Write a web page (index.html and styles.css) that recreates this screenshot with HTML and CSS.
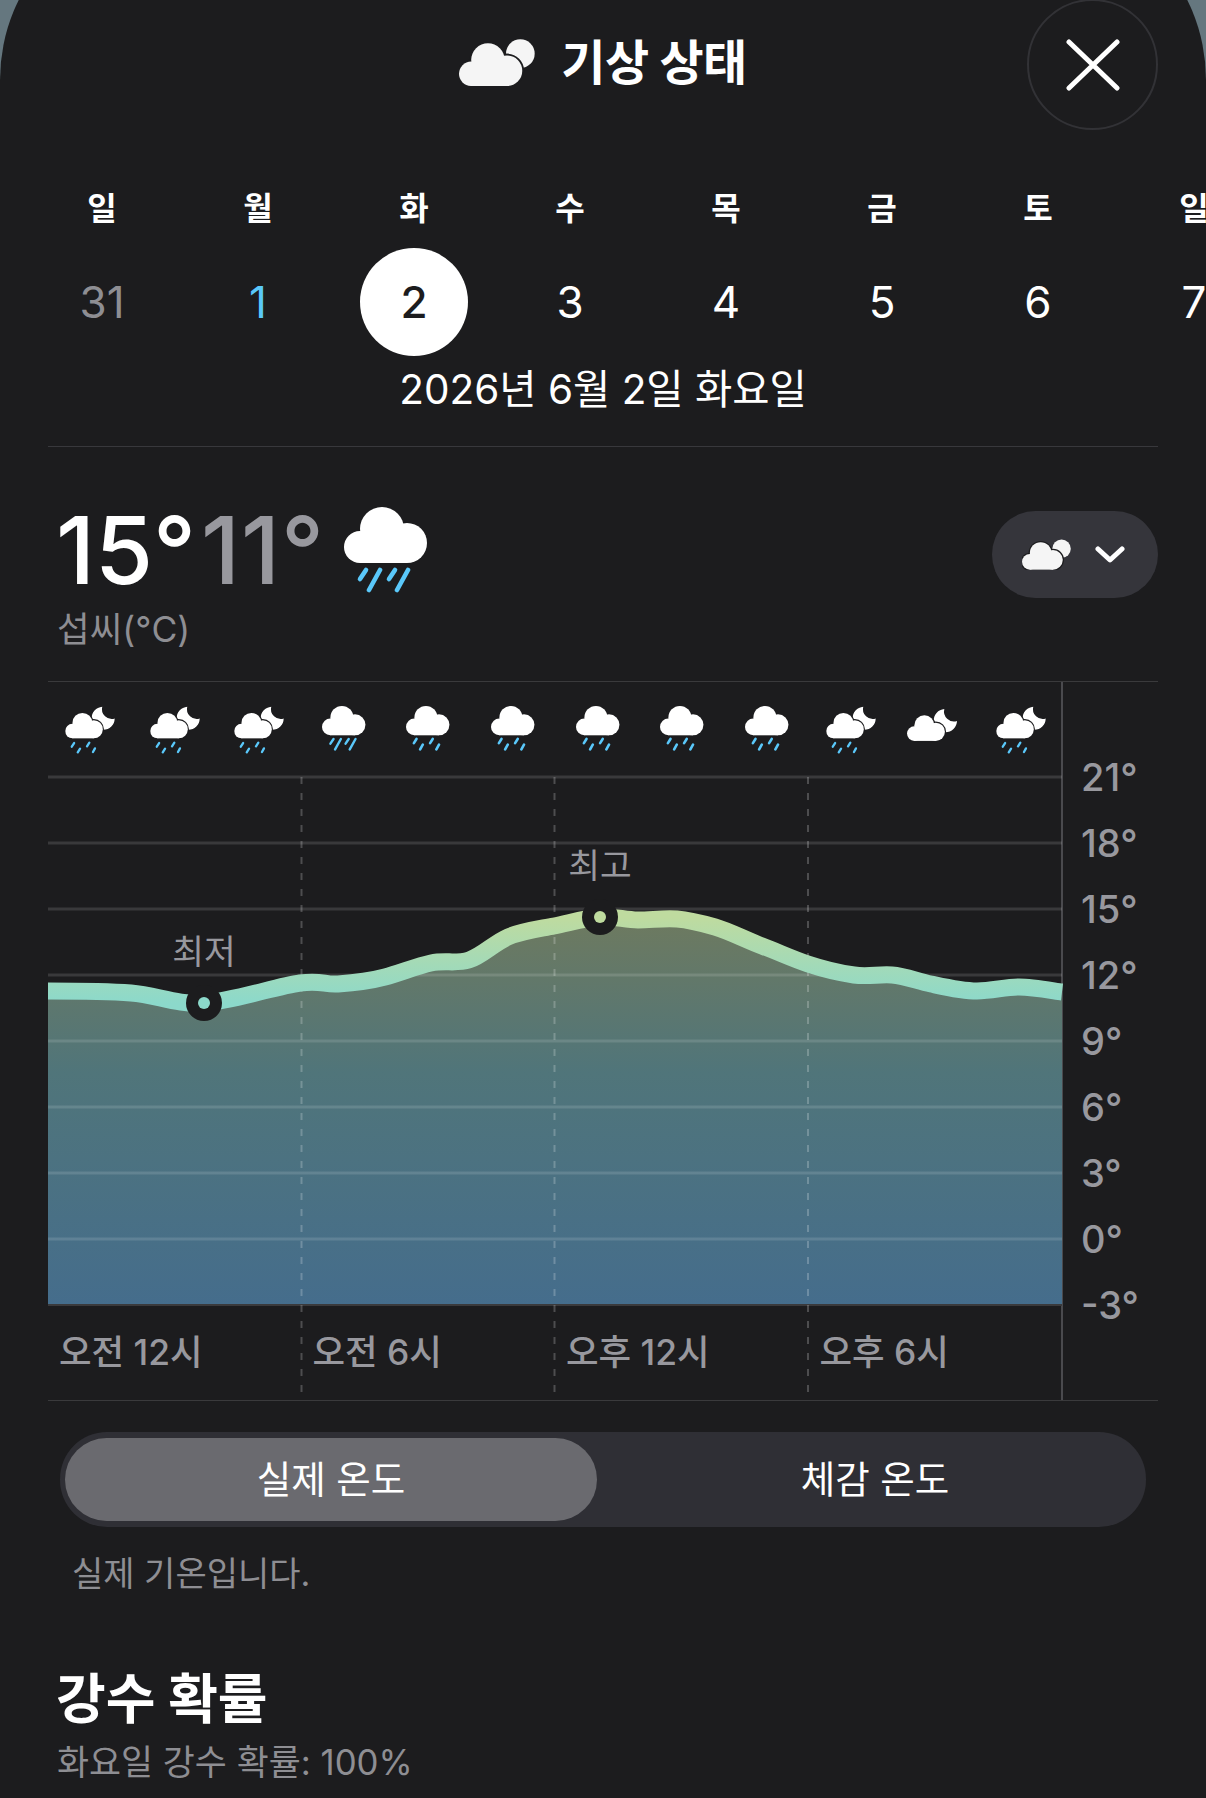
FILE: index.html
```html
<!DOCTYPE html>
<html lang="ko">

<head>
    <meta charset="UTF-8">
    <meta name="viewport" content="width=device-width, initial-scale=1.0">
    <title>기상 상태</title>
    <link rel="stylesheet" href="styles.css">
</head>

<body>

    <svg class="icon-defs" width="0" height="0" aria-hidden="true">
        <defs>
            <g id="cloud-shape">
                <circle cx="16" cy="40" r="16"></circle>
                <circle cx="38" cy="22" r="22"></circle>
                <circle cx="63" cy="36" r="20"></circle>
                <rect x="16" y="36" width="47" height="20"></rect>
            </g>
            <symbol id="icon-sun-cloud" viewBox="0 0 228 141">
                <circle cx="184" cy="44" r="43" fill="#f5f5f5"></circle>
                <use href="#cloud-shape" transform="translate(0 13) scale(2.286)" fill="#1c1c1e" stroke="#1c1c1e" stroke-width="5"></use>
                <use href="#cloud-shape" transform="translate(0 13) scale(2.286)" fill="#f5f5f5"></use>
            </symbol>
            <symbol id="icon-rain-heavy" viewBox="0 0 84 86">
                <use href="#cloud-shape" fill="#fff"></use>
                <g stroke="#5ac8fa" stroke-width="4.6" stroke-linecap="round">
                    <path d="M16 72 22 63"></path>
                    <path d="M25 83 36 63"></path>
                    <path d="M45 72 51 63"></path>
                    <path d="M53 83 64 63"></path>
                </g>
            </symbol>
            <symbol id="icon-rain-light" viewBox="0 0 84 86">
                <use href="#cloud-shape" fill="#fff"></use>
                <g stroke="#5ac8fa" stroke-width="5" stroke-linecap="round">
                    <path d="M15 71 20 63"></path>
                    <path d="M27 83 32 74"></path>
                    <path d="M46 71 51 63"></path>
                    <path d="M58 83 63 74"></path>
                </g>
            </symbol>
            <symbol id="icon-moon-cloud" viewBox="0 0 150 100">
                <path d="M112 2A35 35 0 1 0 150 38A30 30 0 0 1 112 2Z" fill="#fff"></path>
                <use href="#cloud-shape" transform="translate(0 21) scale(1.37)" fill="#1c1c1e" stroke="#1c1c1e" stroke-width="5"></use>
                <use href="#cloud-shape" transform="translate(0 21) scale(1.37)" fill="#fff"></use>
            </symbol>
            <symbol id="icon-moon-rain" viewBox="0 0 150 145">
                <use href="#icon-moon-cloud" width="150" height="100"></use>
                <g stroke="#5ac8fa" stroke-width="7" stroke-linecap="round">
                    <path d="M20 123 27 112"></path>
                    <path d="M38 140 45 129"></path>
                    <path d="M66 122 73 111"></path>
                    <path d="M84 139 90 128"></path>
                </g>
            </symbol>
        </defs>
    </svg>

    <div class="sheet">

        <header class="sheet-header">
            <svg class="title-icon"><use href="#icon-sun-cloud"></use></svg>
            <h1>기상 상태</h1>
            <div class="close-btn">
                <svg viewBox="0 0 54 52" width="54" height="52">
                    <path d="M3 3 51 49M51 3 3 49" stroke="#fff" stroke-width="5" stroke-linecap="round"></path>
                </svg>
            </div>
        </header>

        <div class="week">
            <div class="day"><span class="day-name">일</span><span class="day-num past">31</span></div>
            <div class="day"><span class="day-name">월</span><span class="day-num today">1</span></div>
            <div class="day"><span class="day-name">화</span><span class="day-num selected">2</span></div>
            <div class="day"><span class="day-name">수</span><span class="day-num">3</span></div>
            <div class="day"><span class="day-name">목</span><span class="day-num">4</span></div>
            <div class="day"><span class="day-name">금</span><span class="day-num">5</span></div>
            <div class="day"><span class="day-name">토</span><span class="day-num">6</span></div>
            <div class="day"><span class="day-name">일</span><span class="day-num">7</span></div>
        </div>
        <p class="full-date">2026년 6월 2일 화요일</p>

        <div class="summary">
            <div class="summary-top">
                <div class="temps">
                    <span class="temp-high">15°</span><span class="temp-low">11°</span>
                    <svg class="temp-icon"><use href="#icon-rain-heavy"></use></svg>
                </div>
                <div class="picker">
                    <svg class="picker-icon"><use href="#icon-sun-cloud"></use></svg>
                    <svg viewBox="0 0 30 17" width="30" height="17">
                        <path d="M3 3 15 14 27 3" fill="none" stroke="#fff" stroke-width="5" stroke-linecap="round" stroke-linejoin="round"></path>
                    </svg>
                </div>
            </div>
            <p class="unit">섭씨(°C)</p>
        </div>

        <div class="chart">
            <div class="plot">
                <div class="hour-icons">
                    <svg class="hour-icon"><use href="#icon-moon-rain"></use></svg>
                    <svg class="hour-icon"><use href="#icon-moon-rain"></use></svg>
                    <svg class="hour-icon"><use href="#icon-moon-rain"></use></svg>
                    <svg class="hour-icon rain"><use href="#icon-rain-heavy"></use></svg>
                    <svg class="hour-icon rain"><use href="#icon-rain-light"></use></svg>
                    <svg class="hour-icon rain"><use href="#icon-rain-light"></use></svg>
                    <svg class="hour-icon rain"><use href="#icon-rain-light"></use></svg>
                    <svg class="hour-icon rain"><use href="#icon-rain-light"></use></svg>
                    <svg class="hour-icon rain"><use href="#icon-rain-light"></use></svg>
                    <svg class="hour-icon"><use href="#icon-moon-rain"></use></svg>
                    <svg class="hour-icon dry"><use href="#icon-moon-cloud"></use></svg>
                    <svg class="hour-icon"><use href="#icon-moon-rain"></use></svg>
                </div>
                <svg class="plot-svg" viewBox="0 0 1014 623" width="1014" height="623">
                    <defs>
                        <linearGradient id="areaFill" gradientUnits="userSpaceOnUse" x1="0" y1="140" x2="0" y2="528">
                            <stop offset="0" stop-color="#6e7a5f"></stop>
                            <stop offset="0.4" stop-color="#50757a"></stop>
                            <stop offset="1" stop-color="#456d8c"></stop>
                        </linearGradient>
                        <linearGradient id="lineFill" gradientUnits="userSpaceOnUse" x1="0" y1="140" x2="0" y2="226">
                            <stop offset="0" stop-color="#bfdb9f"></stop>
                            <stop offset="1" stop-color="#8cd9cb"></stop>
                        </linearGradient>
                    </defs>
                    <path fill="url(#areaFill)" d="M0 214S57 214 83 216S128 228 156 226S230 209 252 206S276 208 290 207S322 204 337 200S369 189 383 186S408 187 421 183S446 166 460 160S491 152 506 149S538 141 552 140S577 143 590 143S616 141 629 142S653 146 667 150S698 163 714 169S745 182 760 187S792 196 806 198S831 197 844 198S869 204 883 207S914 214 929 214S957 210 971 210S1006 214 1014 215V528H0Z"></path>
                    <g stroke="#fff" stroke-opacity="0.13" stroke-width="3">
                        <path d="M0 0H1014"></path>
                        <path d="M0 66H1014"></path>
                        <path d="M0 132H1014"></path>
                        <path d="M0 198H1014"></path>
                        <path d="M0 264H1014"></path>
                        <path d="M0 330H1014"></path>
                        <path d="M0 396H1014"></path>
                        <path d="M0 462H1014"></path>
                    </g>
                    <path d="M0 528H1014" stroke="#3a3a3c" stroke-width="2"></path>
                    <g stroke="#fff" stroke-opacity="0.22" stroke-width="2" stroke-dasharray="7 9">
                        <path d="M253.5 0V618"></path>
                        <path d="M506.5 0V618"></path>
                        <path d="M760 0V618"></path>
                    </g>
                    <path fill="none" stroke="url(#lineFill)" stroke-width="17" d="M0 214S57 214 83 216S128 228 156 226S230 209 252 206S276 208 290 207S322 204 337 200S369 189 383 186S408 187 421 183S446 166 460 160S491 152 506 149S538 141 552 140S577 143 590 143S616 141 629 142S653 146 667 150S698 163 714 169S745 182 760 187S792 196 806 198S831 197 844 198S869 204 883 207S914 214 929 214S957 210 971 210S1006 214 1014 215"></path>
                    <circle cx="156" cy="226" r="18" fill="#1c1c1e"></circle>
                    <circle cx="156" cy="226" r="6" fill="#8cd9cb"></circle>
                    <circle cx="552" cy="140" r="18" fill="#1c1c1e"></circle>
                    <circle cx="552" cy="140" r="6" fill="#bfdb9f"></circle>
                </svg>
                <span class="chart-note note-low">최저</span>
                <span class="chart-note note-high">최고</span>
                <div class="hour-labels">
                    <span>오전 12시</span>
                    <span>오전 6시</span>
                    <span>오후 12시</span>
                    <span>오후 6시</span>
                </div>
            </div>
            <div class="axis">
                <span>21°</span>
                <span>18°</span>
                <span>15°</span>
                <span>12°</span>
                <span>9°</span>
                <span>6°</span>
                <span>3°</span>
                <span>0°</span>
                <span>-3°</span>
            </div>
        </div>

        <div class="segment">
            <div class="segment-item active">실제 온도</div>
            <div class="segment-item second">체감 온도</div>
        </div>
        <p class="segment-note">실제 기온입니다.</p>

        <h2 class="section-title">강수 확률</h2>
        <p class="section-sub">화요일 강수 확률: 100%</p>

    </div>

</body>

</html>
```

FILE: styles.css
```css
* {
    box-sizing: border-box;
}

html,
body {
    margin: 0;
    height: 1798px;
    overflow: hidden;
}

body {
    background: #65777f;
    font-family: Inter, 'Noto Sans CJK KR', sans-serif;
    color: #fff;
}

.icon-defs {
    display: block;
    height: 0;
}

p,
h1,
h2 {
    margin: 0;
}

.sheet {
    margin-top: -100px;
    padding: 100px 48px 0;
    height: 1898px;
    background: #1c1c1e;
    border-radius: 180px 180px 0 0;
}

/* header */
.sheet-header {
    position: relative;
    height: 129px;
    display: flex;
    justify-content: center;
    align-items: center;
    gap: 26px;
}

.sheet-header h1 {
    margin-top: -4px;
    font-size: 48px;
    font-weight: 700;
    line-height: 56px;
    letter-spacing: -0.5px;
}

.title-icon {
    width: 76px;
    height: 47px;
    margin-top: -4px;
}

.close-btn {
    position: absolute;
    top: -1px;
    right: 0;
    width: 131px;
    height: 131px;
    border: 2px solid #323236;
    border-radius: 50%;
    display: flex;
    align-items: center;
    justify-content: center;
}

/* week strip */
.week {
    display: flex;
    margin: 60px 0 0 -24px;
    width: 1248px;
}

.day {
    width: 156px;
    flex-shrink: 0;
    display: flex;
    flex-direction: column;
    align-items: center;
    gap: 19px;
}

.day-name {
    font-size: 32px;
    font-weight: 700;
    line-height: 40px;
}

.day-num {
    width: 108px;
    height: 108px;
    border-radius: 50%;
    display: flex;
    align-items: center;
    justify-content: center;
    font-size: 44px;
    line-height: 1;
}

.day-num.past {
    color: #8e8e93;
}

.day-num.today {
    color: #5ac8fa;
}

.day-num.selected {
    background: #fff;
    color: #1c1c1e;
    font-weight: 500;
}

.full-date {
    margin-top: 10px;
    padding-bottom: 32px;
    border-bottom: 1px solid #38383c;
    font-size: 40.5px;
    line-height: 48px;
    text-align: center;
}

/* summary */
.summary {
    padding: 53px 0 29px;
}

.summary-top {
    display: flex;
    justify-content: space-between;
    align-items: center;
    height: 100px;
}

.temps {
    display: flex;
    align-items: center;
    padding-left: 8px;
    font-size: 94px;
    font-weight: 500;
    line-height: 100px;
}

.temp-low {
    margin-left: 5px;
    letter-spacing: 1px;
    color: #98989e;
}

.temp-icon {
    width: 84px;
    height: 86px;
    margin: 0 0 0 19px;
}

.picker {
    width: 166px;
    height: 87px;
    margin-top: 8px;
    padding-right: 4px;
    background: #35353b;
    border-radius: 44px;
    display: flex;
    align-items: center;
    justify-content: center;
    gap: 24px;
}

.picker-icon {
    width: 49px;
    height: 31px;
}

.unit {
    margin-top: 8px;
    padding-left: 9px;
    font-size: 35.5px;
    line-height: 44px;
    color: #8e8e93;
}

/* chart */
.chart {
    display: grid;
    grid-template-columns: 1014px 96px;
    height: 720px;
    border-top: 1px solid #3a3a3c;
    border-bottom: 1px solid #3a3a3c;
}

.plot {
    position: relative;
    width: 1015px;
    border-right: 2px solid #4a4a4e;
}

.hour-icons {
    display: flex;
    align-items: center;
    height: 95px;
    padding-left: 17px;
    gap: 34.6px;
}

.hour-icon {
    width: 50px;
    height: 48px;
    flex-shrink: 0;
}

.hour-icon.rain {
    width: 44px;
    height: 45px;
    margin: -3px 3px 0;
}

.hour-icon.dry {
    transform: translate(-4px, -5px);
}

.plot-svg {
    display: block;
    overflow: visible;
}

.chart-note {
    position: absolute;
    transform: translateX(-50%);
    font-size: 34.5px;
    line-height: 40px;
    color: #98989e;
}

.note-low {
    left: 156px;
    top: 250px;
}

.note-high {
    left: 552px;
    top: 164px;
}

.hour-labels {
    position: absolute;
    left: 0;
    right: 0;
    top: 651px;
    display: grid;
    grid-template-columns: repeat(4, 253.5px);
    font-size: 35.4px;
    font-weight: 500;
    line-height: 40px;
    color: #98989e;
}

.hour-labels span {
    padding-left: 11px;
}

.axis {
    display: flex;
    flex-direction: column;
    padding: 62px 0 0 19px;
    font-size: 38px;
    font-weight: 500;
    color: #98989e;
}

.axis span {
    height: 66px;
    line-height: 66px;
}

/* segmented control */
.segment {
    display: grid;
    grid-template-columns: 532px 1fr;
    height: 95px;
    margin: 31px 12px 0;
    padding: 6px 5px;
    background: #2f2f35;
    border-radius: 47px;
}

.segment-item {
    display: flex;
    align-items: center;
    justify-content: center;
    padding-bottom: 6px;
    font-size: 37.5px;
    border-radius: 42px;
}

.segment-item.active {
    background: #6a6a6f;
}

.segment-item.second {
    padding-left: 12px;
}

.segment-note {
    margin-top: 25px;
    padding-left: 24px;
    font-size: 34px;
    line-height: 44px;
    color: #8e8e93;
}

.section-title {
    margin-top: 72px;
    padding-left: 8px;
    font-size: 54px;
    font-weight: 700;
    line-height: 64px;
}

.section-sub {
    margin-top: 8px;
    padding-left: 9px;
    font-size: 34.8px;
    line-height: 44px;
    color: #8e8e93;
}
```
